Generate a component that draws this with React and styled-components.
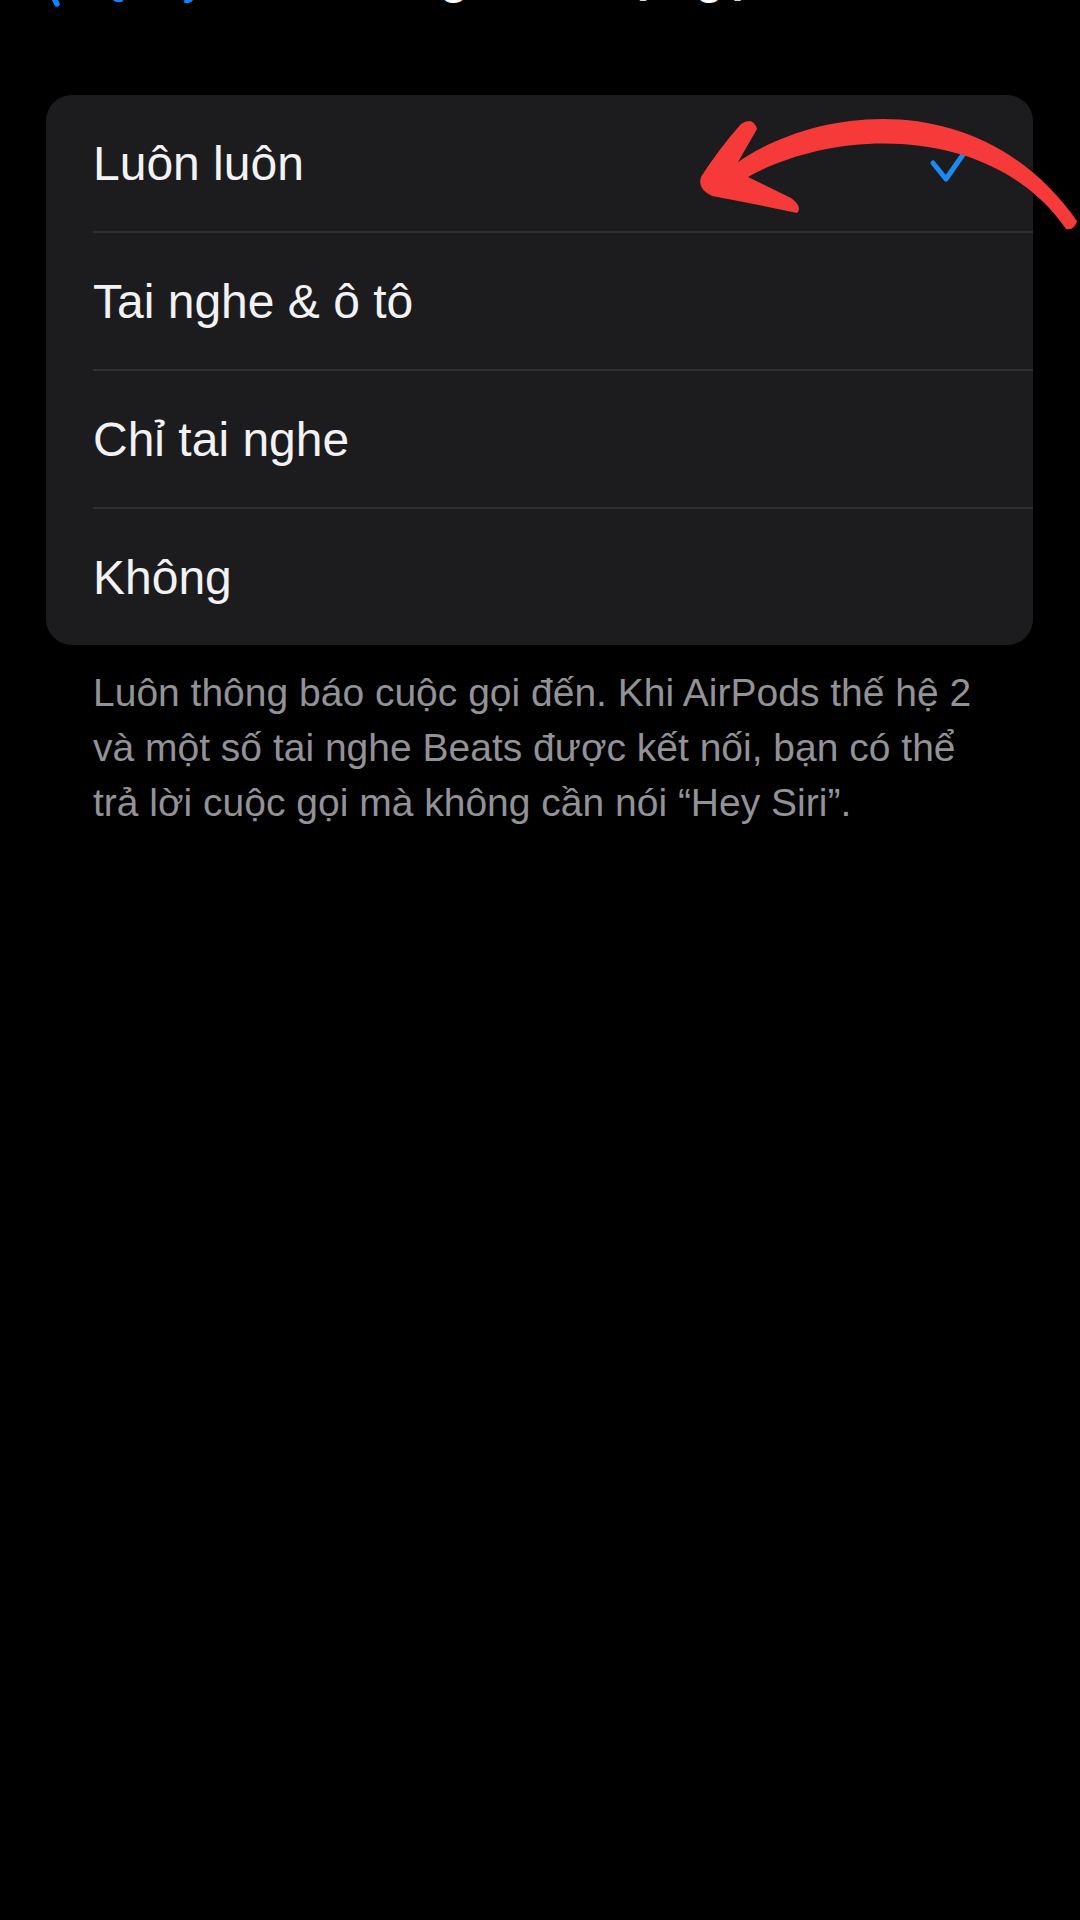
import React from "react";
import styled, { createGlobalStyle } from "styled-components";

const Global = createGlobalStyle`
  html, body {
    margin: 0;
    padding: 0;
    background: #000;
  }
  body {
    font-family: "Liberation Sans", Arial, sans-serif;
    -webkit-font-smoothing: antialiased;
  }
  #root {
    width: 1080px;
    min-height: 1920px;
    overflow: hidden;
  }
`;

const Screen = styled.div`
  position: relative;
  width: 1080px;
  min-height: 1920px;
  background: #000;
  display: flex;
  flex-direction: column;
  overflow: hidden;
`;

const NavBar = styled.header`
  height: 60px;
  margin-top: -53px;
  display: grid;
  grid-template-columns: 1fr auto 1fr;
  padding-left: 42px;
`;

const BackButton = styled.div`
  display: flex;
  align-items: flex-start;
  gap: 32px;
  color: #0a84ff;
  font-size: 48px;
  line-height: 60px;
  white-space: nowrap;
`;

const Chevron = styled.svg`
  margin-top: 10px;
  flex: none;
`;

const Title = styled.h1`
  margin: 0 0 0 -30px;
  color: #fff;
  font-size: 46px;
  font-weight: 700;
  line-height: 60px;
  white-space: nowrap;
`;

const Card = styled.section`
  margin: 88px 47px 0 46px;
  background: #1c1c1e;
  border-radius: 26px;
  overflow: hidden;
`;

const Row = styled.div`
  height: 136px;
  display: flex;
  align-items: center;
  justify-content: space-between;
  padding: 0 60px 0 47px;
  color: #f2f2f4;
  font-size: 48px;
`;

const Separator = styled.div`
  height: 2px;
  margin-left: 47px;
  background: #2f2f31;
`;

const Footer = styled.p`
  margin: 20px 60px 0 93px;
  color: #929297;
  font-size: 39px;
  line-height: 55px;
`;

const Line = styled.span`
  display: block;
  white-space: nowrap;
`;

const Annotation = styled.svg`
  position: absolute;
  left: 0;
  top: 0;
  pointer-events: none;
`;

function Check() {
  return (
    <svg width="44" height="42" viewBox="0 0 44 42">
      <path
        d="M4 21 L17 37 L40 4"
        fill="none"
        stroke="#1c8af5"
        strokeWidth="5"
        strokeLinecap="round"
        strokeLinejoin="round"
      />
    </svg>
  );
}

const options = ["Luôn luôn", "Tai nghe & ô tô", "Chỉ tai nghe", "Không"];

export default function App() {
  return (
    <>
      <Global />
      <Screen>
        <NavBar>
          <BackButton>
            <Chevron width="18" height="50" viewBox="0 0 18 50">
              <path
                d="M15 3 L4 25 L15 47"
                fill="none"
                stroke="#0a84ff"
                strokeWidth="5.5"
                strokeLinecap="round"
                strokeLinejoin="round"
              />
            </Chevron>
            <span>Quay lại</span>
          </BackButton>
          <Title>Thông báo cuộc gọi</Title>
          <div />
        </NavBar>

        <Card>
          {options.map((label, i) => (
            <React.Fragment key={label}>
              {i > 0 && <Separator />}
              <Row>
                <span>{label}</span>
                {i === 0 && <Check />}
              </Row>
            </React.Fragment>
          ))}
        </Card>

        <Footer>
          <Line>Luôn thông báo cuộc gọi đến. Khi AirPods thế hệ 2</Line>
          <Line>và một số tai nghe Beats được kết nối, bạn có thể</Line>
          <Line>trả lời cuộc gọi mà không cần nói “Hey Siri”.</Line>
        </Footer>

        <Annotation width="1080" height="300" viewBox="0 0 1080 300">
          <path
            fill="#f63a3a"
            d="M701 177
               Q718 150 741 124
               Q753 116 757 129
               L738 162
               C820 106 982 86 1077 221
               Q1074 231 1066 229
               C990 120 830 130 748 177
               L791 198
               Q803 207 797 213
               Q760 205 712 196
               Q697 189 701 177 Z"
          />
        </Annotation>
      </Screen>
    </>
  );
}
